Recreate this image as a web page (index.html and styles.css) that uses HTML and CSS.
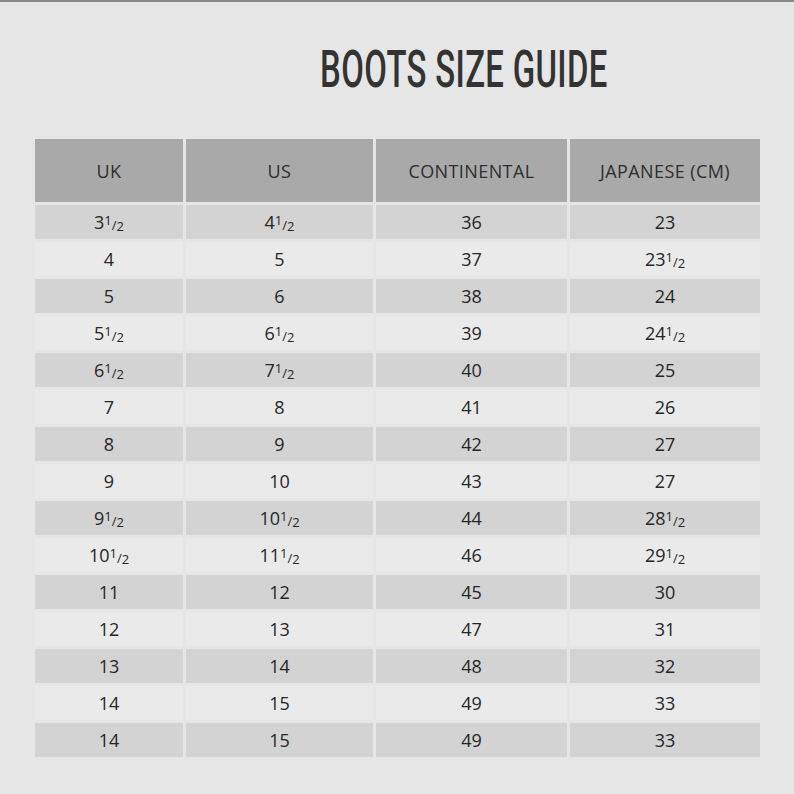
FILE: index.html
```html
<!DOCTYPE html>
<html>
<head>
<meta charset="utf-8">
<link rel="stylesheet" href="styles.css">
</head>
<body>
<div class="page">
  <h1 class="title"><span class="title-text">BOOTS SIZE GUIDE</span></h1>
  <div class="table">
    <div class="cell head">UK</div><div class="cell head">US</div><div class="cell head">CONTINENTAL</div><div class="cell head">JAPANESE (CM)</div>

    <div class="cell dark">3<span class="fr"><sup>1</sup>/<sub>2</sub></span></div><div class="cell dark">4<span class="fr"><sup>1</sup>/<sub>2</sub></span></div><div class="cell dark">36</div><div class="cell dark">23</div>
    <div class="cell light">4</div><div class="cell light">5</div><div class="cell light">37</div><div class="cell light">23<span class="fr"><sup>1</sup>/<sub>2</sub></span></div>
    <div class="cell dark">5</div><div class="cell dark">6</div><div class="cell dark">38</div><div class="cell dark">24</div>
    <div class="cell light">5<span class="fr"><sup>1</sup>/<sub>2</sub></span></div><div class="cell light">6<span class="fr"><sup>1</sup>/<sub>2</sub></span></div><div class="cell light">39</div><div class="cell light">24<span class="fr"><sup>1</sup>/<sub>2</sub></span></div>
    <div class="cell dark">6<span class="fr"><sup>1</sup>/<sub>2</sub></span></div><div class="cell dark">7<span class="fr"><sup>1</sup>/<sub>2</sub></span></div><div class="cell dark">40</div><div class="cell dark">25</div>
    <div class="cell light">7</div><div class="cell light">8</div><div class="cell light">41</div><div class="cell light">26</div>
    <div class="cell dark">8</div><div class="cell dark">9</div><div class="cell dark">42</div><div class="cell dark">27</div>
    <div class="cell light">9</div><div class="cell light">10</div><div class="cell light">43</div><div class="cell light">27</div>
    <div class="cell dark">9<span class="fr"><sup>1</sup>/<sub>2</sub></span></div><div class="cell dark">10<span class="fr"><sup>1</sup>/<sub>2</sub></span></div><div class="cell dark">44</div><div class="cell dark">28<span class="fr"><sup>1</sup>/<sub>2</sub></span></div>
    <div class="cell light">10<span class="fr"><sup>1</sup>/<sub>2</sub></span></div><div class="cell light">11<span class="fr"><sup>1</sup>/<sub>2</sub></span></div><div class="cell light">46</div><div class="cell light">29<span class="fr"><sup>1</sup>/<sub>2</sub></span></div>
    <div class="cell dark">11</div><div class="cell dark">12</div><div class="cell dark">45</div><div class="cell dark">30</div>
    <div class="cell light">12</div><div class="cell light">13</div><div class="cell light">47</div><div class="cell light">31</div>
    <div class="cell dark">13</div><div class="cell dark">14</div><div class="cell dark">48</div><div class="cell dark">32</div>
    <div class="cell light">14</div><div class="cell light">15</div><div class="cell light">49</div><div class="cell light">33</div>
    <div class="cell dark">14</div><div class="cell dark">15</div><div class="cell dark">49</div><div class="cell dark">33</div>
  </div>
</div>
</body>
</html>
```

FILE: styles.css
```css
html, body {
  margin: 0;
  padding: 0;
}
body {
  background: #e6e6e6;
  border-top: 2px solid #8a8a8a;
  height: 792px;
  font-family: "Open Sans", "DejaVu Sans", sans-serif;
  color: #2f2f2f;
}
.page {
  padding: 38px 0 0 35px;
}
.title {
  margin: 0;
  height: 99px;
  display: flex;
  justify-content: center;
  width: 725px;
}
.title-text {
  display: inline-block;
  font-family: Roboto, "Liberation Sans", sans-serif;
  font-weight: 500;
  font-size: 51px;
  line-height: 60px;
  color: #333333;
  letter-spacing: 0.5px;
  transform: scaleX(0.645);
  transform-origin: center;
  margin-left: 132px;
  white-space: nowrap;
}
.table {
  display: grid;
  grid-template-columns: 148px 187px 191px 190px;
  grid-template-rows: 63px;
  grid-auto-rows: 34px;
  column-gap: 3px;
  row-gap: 3px;
  width: 725px;
}
.cell {
  display: flex;
  align-items: center;
  justify-content: center;
  font-size: 18px;
  font-weight: 500;
  color: #262626;
}
.head {
  background: #a9a9a9;
  font-size: 18px;
  letter-spacing: 0.4px;
  color: #2e2e2e;
}
.dark {
  background: #d3d3d3;
}
.light {
  background: #eaeaea;
}
.fr {
  font-size: 13px;
  position: relative;
  top: 1px;
}
.fr sup {
  font-size: 13px;
  vertical-align: 5px;
}
.fr sub {
  font-size: 13px;
  vertical-align: -1px;
}
```
